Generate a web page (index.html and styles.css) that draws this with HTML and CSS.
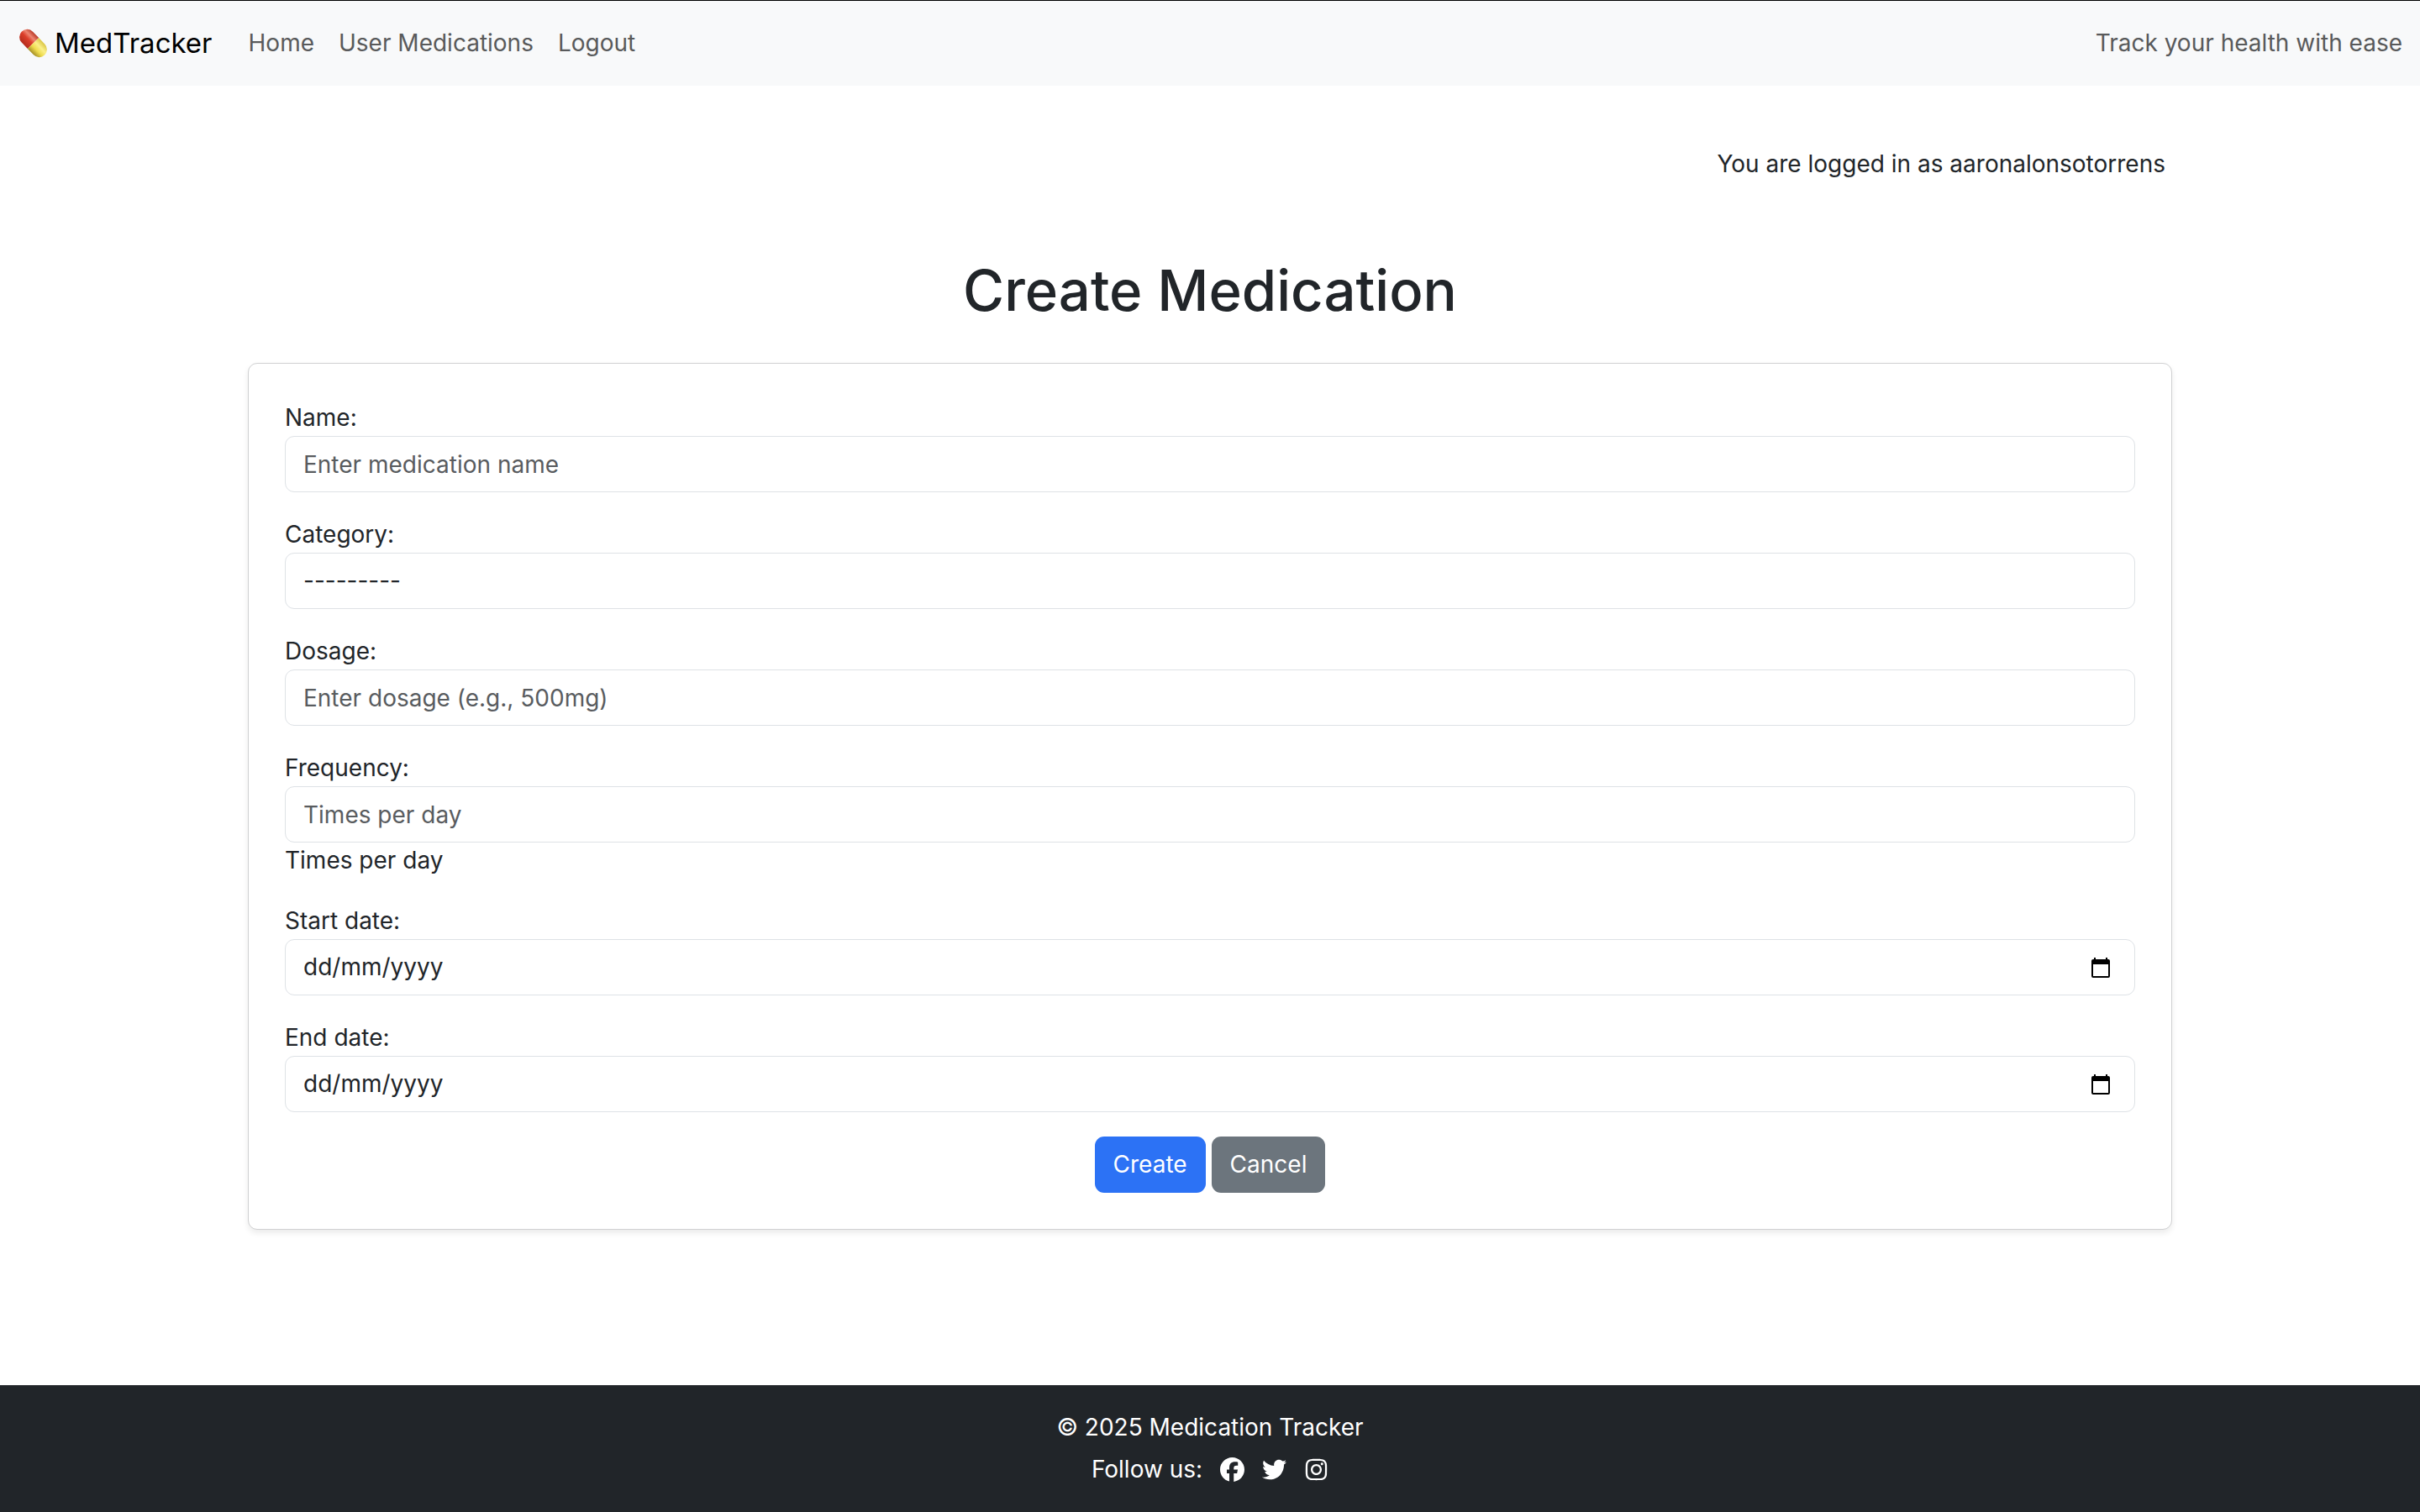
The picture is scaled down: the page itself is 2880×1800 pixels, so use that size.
FILE: index.html
```html
<!DOCTYPE html>
<html lang="en">
<head>
  <meta charset="utf-8">
  <meta name="viewport" content="width=device-width, initial-scale=1">
  <title>Create Medication - MedTracker</title>
  <link rel="stylesheet" href="styles.css">
</head>
<body>
  <header class="navbar">
    <a class="brand" href="#">
      <svg class="pill" viewBox="0 0 36 36" aria-hidden="true">
        <defs>
          <linearGradient id="pill-red" x1="0" y1="0" x2="0" y2="1">
            <stop offset="0" stop-color="#b93a26"/>
            <stop offset="0.3" stop-color="#ee8672"/>
            <stop offset="0.55" stop-color="#dc3f2b"/>
            <stop offset="1" stop-color="#b42c1c"/>
          </linearGradient>
          <linearGradient id="pill-yellow" x1="0" y1="0" x2="0" y2="1">
            <stop offset="0" stop-color="#d9c545"/>
            <stop offset="0.35" stop-color="#fbf08a"/>
            <stop offset="0.65" stop-color="#efdc4e"/>
            <stop offset="1" stop-color="#a58f27"/>
          </linearGradient>
        </defs>
        <g transform="rotate(46 18 18)">
          <path d="M18 9H8a9 9 0 0 0 0 18h10z" fill="url(#pill-red)"/>
          <path d="M18 9h10a9 9 0 0 1 0 18H18z" fill="url(#pill-yellow)"/>
        </g>
      </svg>
      <span>MedTracker</span>
    </a>
    <nav class="nav-links" aria-label="Main">
      <a href="#">Home</a>
      <a href="#">User Medications</a>
      <a href="#">Logout</a>
    </nav>
    <span class="tagline">Track your health with ease</span>
  </header>

  <main class="container">
    <p class="login-status">You are logged in as aaronalonsotorrens</p>
    <h1 class="title">Create Medication</h1>
    <form class="card">
      <div class="field">
        <label for="name">Name:</label>
        <input class="control" id="name" type="text" placeholder="Enter medication name">
      </div>
      <div class="field">
        <label for="category">Category:</label>
        <select class="control" id="category">
          <option>---------</option>
        </select>
      </div>
      <div class="field">
        <label for="dosage">Dosage:</label>
        <input class="control" id="dosage" type="text" placeholder="Enter dosage (e.g., 500mg)">
      </div>
      <div class="field">
        <label for="frequency">Frequency:</label>
        <input class="control" id="frequency" type="text" inputmode="numeric" placeholder="Times per day" aria-describedby="frequency-help">
        <span id="frequency-help">Times per day</span>
      </div>
      <div class="field">
        <label for="start-date">Start date:</label>
        <div class="control date">
          <input class="date-input" id="start-date" type="text" placeholder="dd/mm/yyyy">
          <button class="date-button" type="button" aria-label="Choose start date">
            <svg class="calendar" viewBox="0 0 22 24" aria-hidden="true"><path fill="currentColor" fill-rule="evenodd" d="M3 0h2v2h12V0h2v2h1a2 2 0 0 1 2 2v18a2 2 0 0 1-2 2H2a2 2 0 0 1-2-2V4a2 2 0 0 1 2-2h1zM2 8v14h18V8z"/></svg>
          </button>
        </div>
      </div>
      <div class="field">
        <label for="end-date">End date:</label>
        <div class="control date">
          <input class="date-input" id="end-date" type="text" placeholder="dd/mm/yyyy">
          <button class="date-button" type="button" aria-label="Choose end date">
            <svg class="calendar" viewBox="0 0 22 24" aria-hidden="true"><path fill="currentColor" fill-rule="evenodd" d="M3 0h2v2h12V0h2v2h1a2 2 0 0 1 2 2v18a2 2 0 0 1-2 2H2a2 2 0 0 1-2-2V4a2 2 0 0 1 2-2h1zM2 8v14h18V8z"/></svg>
          </button>
        </div>
      </div>
      <div class="actions">
        <button class="btn btn-primary" type="submit">Create</button>
        <a class="btn btn-secondary" href="#">Cancel</a>
      </div>
    </form>
  </main>

  <footer class="footer">
    <p>© 2025 Medication Tracker</p>
    <div class="social">
      <span>Follow us:</span>
      <a href="#" aria-label="Facebook"><svg class="social-icon" viewBox="0 0 512 512"><path fill="currentColor" d="M512 256C512 114.600 397.400 0 256 0S0 114.600 0 256C0 376 82.700 476.800 194.200 504.500V334.200H141.400V256h52.800V222.300c0-87.100 39.400-127.500 125-127.500c16.200 0 44.200 3.200 55.700 6.400V172c-6-.6-16.500-1-29.600-1c-42 0-58.200 15.900-58.200 57.200V256h83.600l-14.400 78.200H287V510.100C413.800 494.800 512 386.900 512 256z"/></svg></a>
      <a href="#" aria-label="Twitter"><svg class="social-icon" viewBox="0 0 512 512"><path fill="currentColor" d="M459.370 151.716c.325 4.548.325 9.097.325 13.645 0 138.720-105.583 298.558-298.558 298.558-59.452 0-114.680-17.219-161.137-47.106 8.447.974 16.568 1.299 25.340 1.299 49.055 0 94.213-16.568 130.274-44.832-46.132-.975-84.792-31.188-98.112-72.772 6.498.974 12.995 1.624 19.818 1.624 9.421 0 18.843-1.300 27.614-3.573-48.081-9.747-84.143-51.980-84.143-102.985v-1.299c13.969 7.797 30.214 12.670 47.431 13.319-28.264-18.843-46.781-51.005-46.781-87.391 0-19.492 5.197-37.360 14.294-52.954 51.655 63.675 129.300 105.258 216.365 109.807-1.624-7.797-2.599-15.918-2.599-24.040 0-57.828 46.782-104.934 104.934-104.934 30.213 0 57.502 12.670 76.670 33.137 23.715-4.548 46.456-13.320 66.599-25.340-7.798 24.366-24.366 44.833-46.132 57.827 21.117-2.273 41.584-8.122 60.426-16.243-14.292 20.791-32.161 39.308-52.628 54.253z"/></svg></a>
      <a href="#" aria-label="Instagram"><svg class="social-icon" viewBox="-32 0 512 512"><path fill="currentColor" d="M224.100 141c-63.600 0-114.900 51.300-114.900 114.900s51.300 114.900 114.900 114.900S339 319.500 339 255.900 287.700 141 224.100 141zm0 189.600c-41.100 0-74.700-33.500-74.700-74.700s33.500-74.700 74.700-74.700 74.700 33.500 74.700 74.700-33.600 74.700-74.700 74.700zm146.400-194.300c0 14.900-12 26.800-26.800 26.800-14.900 0-26.800-12-26.800-26.800s12-26.800 26.800-26.800 26.800 12 26.800 26.800zm76.100 27.200c-1.700-35.900-9.900-67.700-36.200-93.900-26.200-26.200-58-34.400-93.900-36.200-37-2.100-147.900-2.100-184.900 0-35.800 1.700-67.600 9.900-93.900 36.100s-34.400 58-36.200 93.900c-2.100 37-2.100 147.900 0 184.900 1.700 35.900 9.900 67.700 36.200 93.900s58 34.400 93.900 36.200c37 2.100 147.900 2.100 184.900 0 35.900-1.700 67.700-9.900 93.900-36.200 26.200-26.200 34.400-58 36.200-93.900 2.100-37 2.100-147.800 0-184.800zM398.800 388c-7.800 19.600-22.900 34.700-42.600 42.600-29.500 11.700-99.500 9-132.100 9s-102.700 2.600-132.100-9c-19.600-7.800-34.700-22.900-42.600-42.600-11.700-29.500-9-99.500-9-132.100s-2.600-102.700 9-132.100c7.800-19.600 22.900-34.700 42.600-42.600 29.500-11.700 99.500-9 132.100-9s102.700-2.600 132.100 9c19.600 7.800 34.700 22.900 42.600 42.600 11.700 29.500 9 99.500 9 132.100s2.700 102.700-9 132.100z"/></svg></a>
    </div>
  </footer>
</body>
</html>
```
FILE: styles.css
```css
*,
*::before,
*::after {
  box-sizing: border-box;
}

body {
  margin: 0;
  min-height: 100vh;
  display: flex;
  flex-direction: column;
  background: #fff;
  color: #212529;
  font-family: Inter, "Liberation Sans", sans-serif;
  font-size: 28px;
  line-height: 43px;
}

p,
h1 {
  margin: 0;
}

a {
  color: inherit;
  text-decoration: none;
}

input,
select,
button {
  font: inherit;
  color: inherit;
}

/* Navigation bar */
.navbar {
  display: flex;
  align-items: center;
  padding: 29px 21px;
  border-top: 1px solid #000;
  background: #f8f9fa;
  color: #595a5b;
}

.brand {
  display: flex;
  align-items: center;
  gap: 7px;
  margin-right: 43px;
  color: #000;
  font-size: 33px;
}

.pill {
  width: 37px;
  height: 37px;
}

.nav-links {
  display: flex;
  gap: 29px;
}

.tagline {
  margin-left: auto;
}

/* Page content */
.container {
  flex: 1;
  width: 100%;
  max-width: 2332px;
  margin: 0 auto;
  padding: 72px 21px;
}

.login-status {
  padding: 0 8px;
  text-align: right;
}

.title {
  margin: 86px 0 43px;
  font-size: 67px;
  font-weight: 500;
  line-height: 86px;
  text-align: center;
}

.card {
  display: flex;
  flex-direction: column;
  gap: 29px;
  padding: 43px;
  border: 1px solid #d0d1d2;
  border-radius: 11px;
  background: #fff;
  box-shadow: 0 4px 7px rgba(0, 0, 0, 0.08);
}

.field {
  display: flex;
  flex-direction: column;
}

.control {
  width: 100%;
  height: 67px;
  padding: 0 21px;
  border: 1px solid #dee2e6;
  border-radius: 11px;
  background: #fff;
  appearance: none;
}

.control::placeholder {
  color: #595c5f;
  opacity: 1;
}

.date {
  display: flex;
  align-items: center;
}

.date-input {
  flex: 1;
  min-width: 0;
  padding: 0;
  border: 0;
  background: none;
  outline: 0;
}

.date-input::placeholder {
  color: #212529;
  opacity: 1;
}

.date-button {
  display: flex;
  padding: 4px 8px;
  border: 0;
  background: none;
  color: #000;
}

.calendar {
  width: 22px;
  height: 24px;
}

.actions {
  display: flex;
  justify-content: center;
  gap: 7px;
}

.btn {
  padding: 12px 22px;
  border: 0;
  border-radius: 11px;
  color: #fff;
}

.btn-primary {
  background: #2c72f5;
}

.btn-secondary {
  background: #6c757d;
}

/* Footer */
.footer {
  display: flex;
  flex-direction: column;
  align-items: center;
  gap: 7px;
  padding: 29px 21px;
  background: #212529;
  color: #fff;
}

.social {
  display: flex;
  align-items: center;
  gap: 21px;
}

.social a {
  display: flex;
}

.social-icon {
  width: 29px;
  height: 29px;
}
```
